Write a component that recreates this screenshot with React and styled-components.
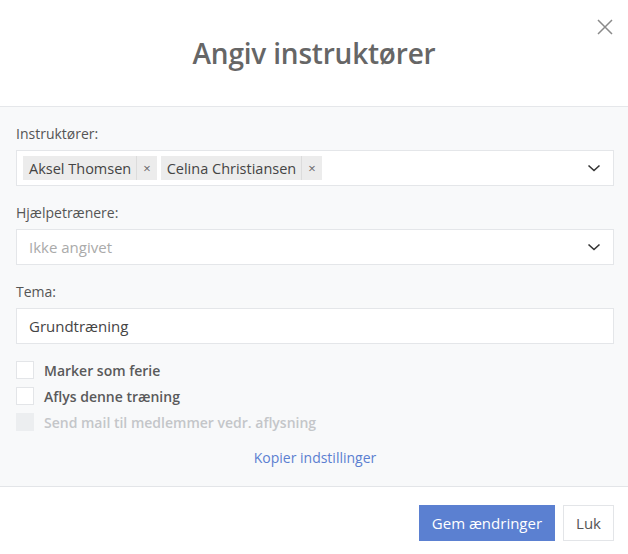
import React, { useState } from 'react';
import styled, { createGlobalStyle } from 'styled-components';

const GlobalStyle = createGlobalStyle`
  html, body {
    margin: 0;
    padding: 0;
    background: #ffffff;
  }
  body {
    font-family: 'Open Sans', 'Noto Sans', sans-serif;
    color: #555;
  }
  * { box-sizing: border-box; }
`;

const Modal = styled.div`
  width: 628px;
  height: 554px;
  display: flex;
  flex-direction: column;
  background: #fff;
`;

const Header = styled.div`
  position: relative;
  height: 107px;
  display: flex;
  align-items: center;
  justify-content: center;
  border-bottom: 1px solid #e5e7ea;
`;

const Title = styled.h2`
  margin: 0;
  font-size: 28px;
  font-weight: 600;
  color: #666;
  letter-spacing: -0.2px;
`;

const CloseBtn = styled.button`
  position: absolute;
  top: 18px;
  right: 14px;
  width: 18px;
  height: 18px;
  padding: 0;
  border: none;
  background: none;
  cursor: pointer;
  color: #8a8a8a;
`;

const Body = styled.div`
  flex: 1;
  background: #f8f9fa;
  padding: 17px 14px 0 16px;
  display: flex;
  flex-direction: column;
  border-bottom: 1px solid #e3e5e8;
`;

const Label = styled.div`
  font-size: 14px;
  color: #555;
  line-height: 19px;
  margin: 0 0 7px;
`;

const Field = styled.div`
  height: 36px;
  background: #fff;
  border: 1px solid #e4e6e9;
  display: flex;
  align-items: center;
  padding: 0 12px 0 6px;
  margin-bottom: 17px;
  font-size: 15px;
  color: ${(p) => (p.$placeholder ? '#aaa' : '#444')};
`;

const FieldContent = styled.div`
  flex: 1;
  display: flex;
  align-items: center;
  gap: 4px;
  padding-left: ${(p) => (p.$pad ? '6px' : '0')};
`;

const Tag = styled.span`
  display: inline-flex;
  align-items: stretch;
  height: 24px;
  background: #ececec;
  font-size: 14.5px;
  color: #444;
`;

const TagText = styled.span`
  padding: 0 5px 0 6px;
  display: flex;
  align-items: center;
`;

const TagRemove = styled.span`
  display: flex;
  align-items: center;
  padding: 0 6px 0 6px;
  border-left: 1px solid #dcdcdc;
  font-size: 13px;
  color: #666;
`;

const Chevron = styled.svg`
  width: 14px;
  height: 14px;
  flex: none;
`;

const Input = styled.input`
  height: 36px;
  background: #fff;
  border: 1px solid #e4e6e9;
  padding: 0 12px;
  font-family: inherit;
  font-size: 15px;
  color: #444;
  outline: none;
  margin-bottom: 13px;
`;

const CheckRow = styled.label`
  display: flex;
  align-items: center;
  height: 26px;
  gap: 10px;
  font-size: 14px;
  font-weight: 600;
  color: ${(p) => (p.$disabled ? '#c4c6c9' : '#5a5a5a')};
`;

const Box = styled.span`
  width: 18px;
  height: 18px;
  background: ${(p) => (p.$disabled ? '#eceef0' : '#fff')};
  border: 1px solid ${(p) => (p.$disabled ? '#eceef0' : '#e3e5e8')};
`;

const LinkRow = styled.div`
  display: flex;
  justify-content: center;
  margin-top: 13px;
  line-height: 19px;
`;

const CopyLink = styled.a`
  font-size: 14px;
  color: #5b7fd1;
  text-decoration: none;
  cursor: pointer;
`;

const Footer = styled.div`
  height: 67px;
  display: flex;
  justify-content: flex-end;
  align-items: flex-start;
  gap: 8px;
  padding: 18px 14px 0 0;
`;

const Button = styled.button`
  height: 36px;
  padding: 0 12px;
  font-family: inherit;
  font-size: 15px;
  border: 1px solid ${(p) => (p.$primary ? '#5b80d1' : '#e3e5e8')};
  background: ${(p) => (p.$primary ? '#5b80d1' : '#fff')};
  color: ${(p) => (p.$primary ? '#fff' : '#555')};
  cursor: pointer;
`;

const ChevronDown = () => (
  <Chevron viewBox="0 0 14 14" fill="none" stroke="#333" strokeWidth="1.6">
    <path d="M1.5 4.5 L7 9.5 L12.5 4.5" />
  </Chevron>
);

export default function App() {
  const [instructors] = useState(['Aksel Thomsen', 'Celina Christiansen']);

  return (
    <>
      <GlobalStyle />
      <Modal>
        <Header>
          <Title>Angiv instruktører</Title>
          <CloseBtn aria-label="Luk">
            <svg width="18" height="18" viewBox="0 0 18 18" stroke="currentColor" strokeWidth="1.5">
              <path d="M2 2 L16 16 M16 2 L2 16" />
            </svg>
          </CloseBtn>
        </Header>
        <Body>
          <Label>Instruktører:</Label>
          <Field>
            <FieldContent>
              {instructors.map((name) => (
                <Tag key={name}>
                  <TagText>{name}</TagText>
                  <TagRemove>×</TagRemove>
                </Tag>
              ))}
            </FieldContent>
            <ChevronDown />
          </Field>
          <Label>Hjælpetrænere:</Label>
          <Field $placeholder>
            <FieldContent $pad>Ikke angivet</FieldContent>
            <ChevronDown />
          </Field>
          <Label>Tema:</Label>
          <Input defaultValue="Grundtræning" />
          <CheckRow>
            <Box />
            Marker som ferie
          </CheckRow>
          <CheckRow>
            <Box />
            Aflys denne træning
          </CheckRow>
          <CheckRow $disabled>
            <Box $disabled />
            Send mail til medlemmer vedr. aflysning
          </CheckRow>
          <LinkRow>
            <CopyLink>Kopier indstillinger</CopyLink>
          </LinkRow>
        </Body>
        <Footer>
          <Button $primary>Gem ændringer</Button>
          <Button>Luk</Button>
        </Footer>
      </Modal>
    </>
  );
}
